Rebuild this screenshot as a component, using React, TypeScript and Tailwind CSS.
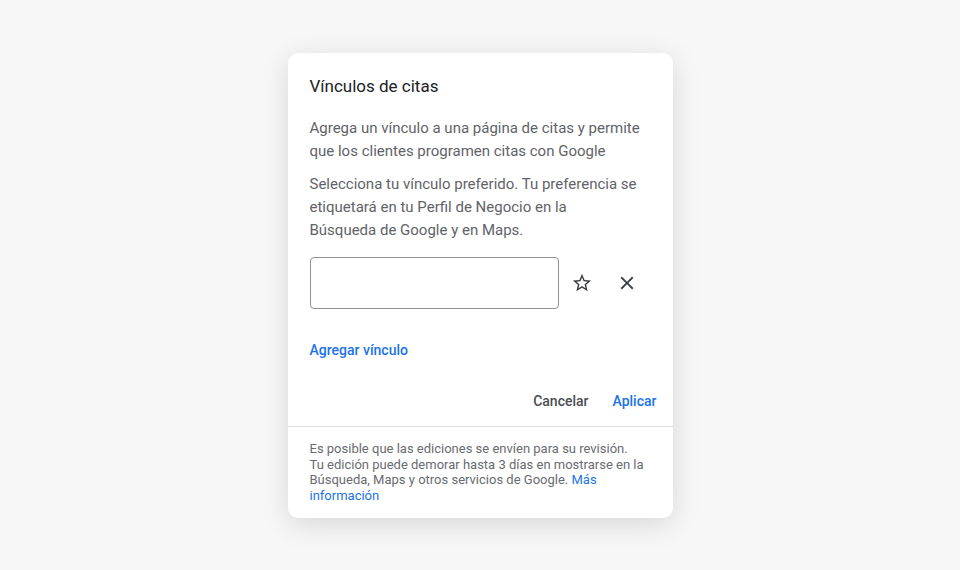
import React from "react";

export default function App() {
  return (
    <div
      className="w-[960px] h-[570px] bg-[#f7f7f7] flex justify-center pt-[53px]"
      style={{ fontFamily: "Roboto, 'Noto Sans', sans-serif" }}
    >
      <div className="w-[385px] h-[465px] bg-white rounded-[10px] shadow-[0_6px_28px_rgba(0,0,0,0.13)] flex flex-col">
        <div className="px-[22px] pt-[22px]">
          <h2 className="text-[17px] leading-[22px] text-[#202124]">Vínculos de citas</h2>
          <p className="mt-[20px] text-[15px] leading-[23px] text-[#5f6368]">
            Agrega un vínculo a una página de citas y permite que los clientes programen citas con Google
          </p>
          <p className="mt-[10px] text-[15px] leading-[23px] text-[#5f6368]">
            Selecciona tu vínculo preferido. Tu preferencia se etiquetará en tu Perfil de Negocio en la
            <br />
            Búsqueda de Google y en Maps.
          </p>
          <div className="mt-[15px] flex items-center">
            <div className="w-[249px] h-[52px] border border-[#8e9195] rounded-[4px]" />
            <button className="ml-[12px] w-[22px] h-[22px] flex items-center justify-center text-[#3c4043]">
              <svg width="22" height="22" viewBox="0 0 24 24" fill="currentColor">
                <path d="M22 9.24l-7.19-.62L12 2 9.19 8.63 2 9.24l5.46 4.73L5.82 21 12 17.27 18.18 21l-1.63-7.03L22 9.24zM12 15.4l-3.76 2.27 1-4.28-3.32-2.88 4.38-.38L12 6.1l1.71 4.04 4.38.38-3.32 2.88 1 4.28L12 15.4z" />
              </svg>
            </button>
            <button className="ml-[23px] w-[22px] h-[22px] flex items-center justify-center text-[#3c4043]">
              <svg width="22" height="22" viewBox="0 0 24 24" fill="currentColor">
                <path d="M19 6.41L17.59 5 12 10.59 6.41 5 5 6.41 10.59 12 5 17.59 6.41 19 12 13.41 17.59 19 19 17.59 13.41 12z" />
              </svg>
            </button>
          </div>
          <div className="mt-[31px] text-[14px] leading-[20px] font-medium text-[#1a73e8]">Agregar vínculo</div>
          <div className="mt-[31px] flex justify-end items-center gap-[24px] -mr-[6px]">
            <button className="text-[14px] leading-[20px] font-medium text-[#4a4d51]">Cancelar</button>
            <button className="text-[14px] leading-[20px] font-medium text-[#1a73e8]">Aplicar</button>
          </div>
        </div>
        <div className="mt-[15px] border-t border-[#dadce0]" />
        <p className="px-[22px] pt-[14px] text-[13px] leading-[15.7px] text-[#686b70]">
          Es posible que las ediciones se envíen para su revisión.
          <br />
          Tu edición puede demorar hasta 3 días en mostrarse en la Búsqueda, Maps y otros servicios de Google.{" "}
          <span className="text-[#1a73e8]">Más información</span>
        </p>
      </div>
    </div>
  );
}
